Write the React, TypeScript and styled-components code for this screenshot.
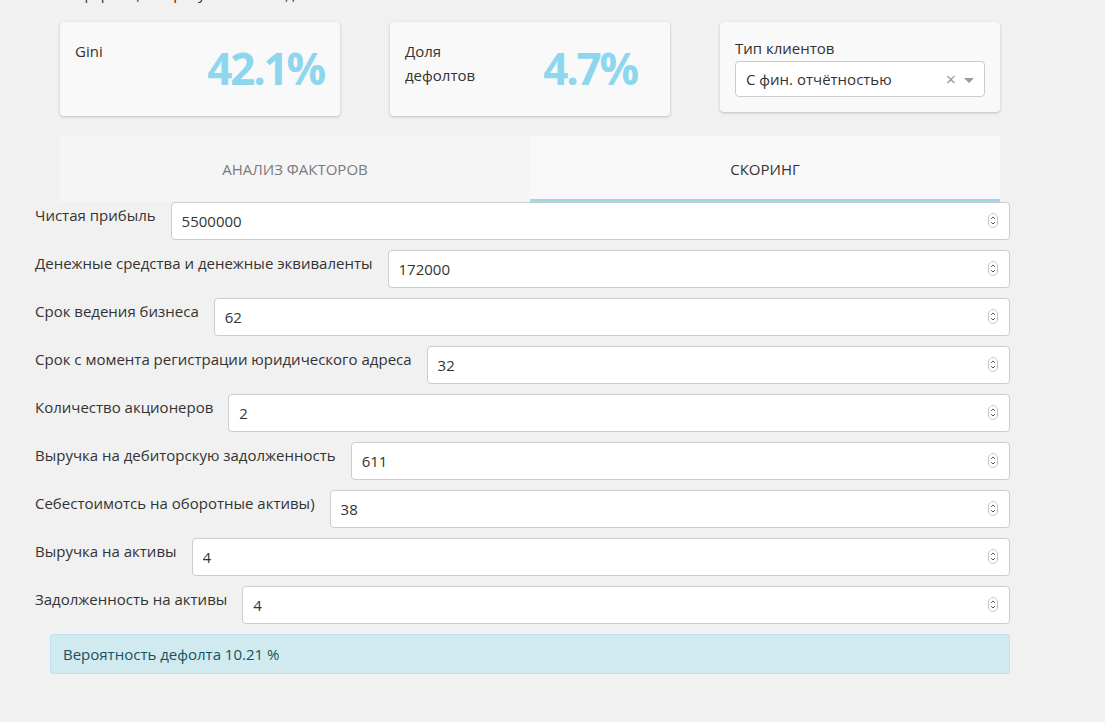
import React from "react";
import styled, { createGlobalStyle } from "styled-components";

const GlobalStyle = createGlobalStyle`
  html, body { margin: 0; padding: 0; background: #f1f1f1; }
  body { font-family: "Open Sans", "Noto Sans", sans-serif; color: #333; overflow: hidden; }
  * { box-sizing: border-box; }
`;

const Page = styled.div`
  width: 1105px;
  height: 722px;
  overflow: hidden;
`;

const CutHeading = styled.div`
  font-size: 15px;
  line-height: 20px;
  margin: -17px 0 0 60px;
  color: #333;
  white-space: nowrap;
`;

const CardsRow = styled.div`
  display: flex;
  gap: 50px;
  margin: 19px 0 0 60px;
  align-items: flex-start;
`;

const Card = styled.div<{ $h: number; $pr: number }>`
  width: 280px;
  height: ${(p) => p.$h}px;
  background: #f9f9f9;
  border-radius: 4px;
  box-shadow: 0 1px 3px rgba(0, 0, 0, 0.22);
  padding: 17px ${(p) => p.$pr}px 16px 15px;
  display: flex;
  justify-content: space-between;
`;

const CardLabel = styled.div`
  font-size: 15px;
  line-height: 24px;
  color: #333;
`;

const BigNumber = styled.div`
  align-self: center;
  font-size: 44px;
  font-weight: 700;
  color: #8dd6ee;
  line-height: 1;
  letter-spacing: -2.2px;
  margin-top: -4px;
`;

const SelectCard = styled.div`
  width: 280px;
  height: 90px;
  background: #f9f9f9;
  border-radius: 4px;
  box-shadow: 0 1px 3px rgba(0, 0, 0, 0.22);
  padding: 14px 15px;
`;

const SelectLabel = styled.div`
  font-size: 15px;
  line-height: 25px;
  color: #333;
`;

const SelectBox = styled.div`
  height: 36px;
  background: #fff;
  border: 1px solid #ccc;
  border-radius: 4px;
  display: flex;
  align-items: center;
  padding: 0 10px;
  font-size: 15px;
  color: #333;
`;

const SelectValue = styled.span`
  flex: 1;
`;

const ClearX = styled.span`
  color: #999;
  font-size: 18px;
  margin-right: 8px;
  line-height: 1;
`;

const Caret = styled.span`
  width: 0;
  height: 0;
  border-left: 5px solid transparent;
  border-right: 5px solid transparent;
  border-top: 5px solid #999;
  margin-top: 2px;
`;

const Tabs = styled.div`
  display: flex;
  width: 940px;
  margin: 20px 0 0 60px;
`;

const Tab = styled.div<{ $active?: boolean }>`
  flex: 1;
  height: 66px;
  display: flex;
  align-items: center;
  justify-content: center;
  font-size: 15px;
  text-transform: uppercase;
  background: ${(p) => (p.$active ? "#f8f8f8" : "#f5f5f5")};
  color: ${(p) => (p.$active ? "#333" : "#7a7a7a")};
  border-bottom: 3px solid ${(p) => (p.$active ? "#98d8f2" : "transparent")};
  padding-top: 2px;
`;

const Form = styled.div`
  display: flex;
  flex-direction: column;
  gap: 10px;
  width: 1010px;
  padding-left: 35px;
`;

const Row = styled.div`
  display: flex;
  align-items: flex-start;
`;

const Label = styled.label`
  font-size: 15px;
  line-height: 21px;
  padding-top: 3px;
  margin-right: 15px;
  white-space: nowrap;
  color: #333;
`;

const InputWrap = styled.div`
  position: relative;
  flex: 1;
`;

const Input = styled.input`
  width: 100%;
  height: 38px;
  border: 1px solid #ccc;
  border-radius: 4px;
  background: #fff;
  padding: 0 30px 0 10px;
  font-family: "Open Sans", sans-serif;
  font-size: 15px;
  color: #333;
  outline: none;
`;

const Stepper = styled.svg`
  position: absolute;
  right: 12px;
  top: 11px;
`;

const Alert = styled.div`
  margin: 10px 0 0 50px;
  width: 960px;
  height: 40px;
  background: #d1eaef;
  border: 1px solid #bde3ec;
  border-radius: 3px;
  color: #17515f;
  font-size: 15px;
  display: flex;
  align-items: center;
  padding: 0 12px;
`;

const fields: [string, string][] = [
  ["Чистая прибыль", "5500000"],
  ["Денежные средства и денежные эквиваленты", "172000"],
  ["Срок ведения бизнеса", "62"],
  ["Срок с момента регистрации юридического адреса", "32"],
  ["Количество акционеров", "2"],
  ["Выручка на дебиторскую задолженность", "611"],
  ["Себестоимотсь на оборотные активы)", "38"],
  ["Выручка на активы", "4"],
  ["Задолженность на активы", "4"],
];

const StepIcon = () => (
  <Stepper width="10" height="15" viewBox="0 0 10 15">
    <rect x="0.5" y="0.5" width="9" height="14" rx="4.5" fill="#fff" stroke="#c8c8c8" />
    <path d="M3.2 5.8 L5 4 L6.8 5.8" fill="none" stroke="#555" strokeWidth="1" />
    <path d="M3.2 9.2 L5 11 L6.8 9.2" fill="none" stroke="#555" strokeWidth="1" />
  </Stepper>
);

export default function App() {
  return (
    <Page>
      <GlobalStyle />
      <CutHeading>Информация о результатах модели</CutHeading>
      <CardsRow>
        <Card $h={94} $pr={16}>
          <CardLabel>Gini</CardLabel>
          <BigNumber>42.1%</BigNumber>
        </Card>
        <Card $h={94} $pr={33}>
          <CardLabel>
            Доля
            <br />
            дефолтов
          </CardLabel>
          <BigNumber>4.7%</BigNumber>
        </Card>
        <SelectCard>
          <SelectLabel>Тип клиентов</SelectLabel>
          <SelectBox>
            <SelectValue>С фин. отчётностью</SelectValue>
            <ClearX>×</ClearX>
            <Caret />
          </SelectBox>
        </SelectCard>
      </CardsRow>
      <Tabs>
        <Tab>Анализ факторов</Tab>
        <Tab $active>Скоринг</Tab>
      </Tabs>
      <Form>
        {fields.map(([label, value]) => (
          <Row key={label}>
            <Label>{label}</Label>
            <InputWrap>
              <Input type="text" defaultValue={value} />
              <StepIcon />
            </InputWrap>
          </Row>
        ))}
      </Form>
      <Alert>Вероятность дефолта 10.21 %</Alert>
    </Page>
  );
}
